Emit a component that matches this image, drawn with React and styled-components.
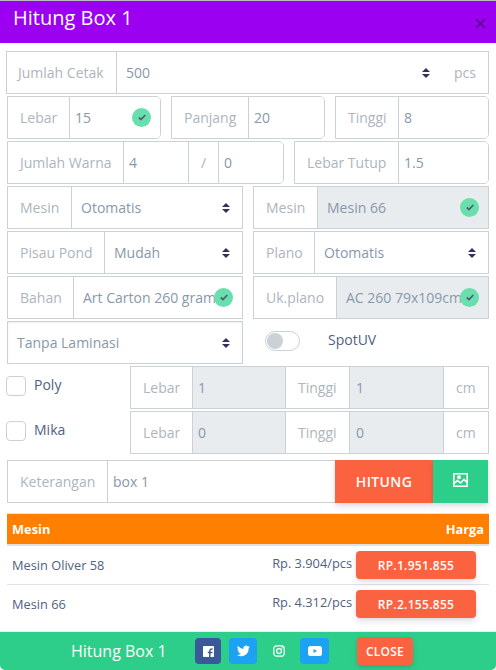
import React from "react";
import styled, { createGlobalStyle, css } from "styled-components";

const Global = createGlobalStyle`
  *, *::before, *::after { box-sizing: border-box; }
  body {
    margin: 0;
    background: #fff;
    font: 400 14px/21px "Open Sans", sans-serif;
    color: #525f7f;
    overflow: hidden;
  }
  button { font-family: inherit; border: 0; padding: 0; color: #fff; cursor: pointer; }
`;

const Modal = styled.div`
  width: 496px;
  height: 670px;
  display: flex;
  flex-direction: column;
  overflow: hidden;
`;

const Header = styled.header`
  height: 43px;
  flex: none;
  display: flex;
  justify-content: space-between;
  padding: 0 10px 0 13px;
  background: #9c00f0;
  border-top: 1px solid #b9b9c4;
`;

const HeaderTitle = styled.h5`
  margin: 2px 0 0;
  font-size: 20px;
  line-height: 30px;
  font-weight: 400;
  color: #fff;
`;

const Dismiss = styled.button`
  width: 11px;
  height: 11px;
  margin-top: 17px;
  background: none;
  display: flex;
  svg { display: block; }
`;

const Form = styled.div`
  flex: none;
  padding: 8px 7px 0;
  display: flex;
  flex-direction: column;
  gap: 2px;
`;

const Row = styled.div`
  display: flex;
  gap: 10px;
  height: 43px;
  margin-left: ${(p) => p.$shift || 0}px;
`;

const Group = styled.div`
  display: flex;
  flex: none;
  width: ${(p) => p.$w}px;
  height: 43px;
  border: 1px solid #cad1d7;
  border-radius: ${(p) => (p.$round ? "0 5px 5px 0" : 0)};
  overflow: hidden;
  > * + * { border-left: 1px solid #cad1d7; }
`;

const Addon = styled.span`
  flex: none;
  width: ${(p) => p.$w}px;
  padding-left: ${(p) => p.$pad ?? 12}px;
  line-height: 42px;
  color: #adb5bd;
  white-space: nowrap;
  && { ${(p) => p.$open && css`border-left: 0;`} }
`;

const Value = styled.div`
  flex: ${(p) => (p.$w ? "none" : "1")};
  width: ${(p) => (p.$w ? `${p.$w}px` : "auto")};
  min-width: 0;
  display: flex;
  align-items: center;
  justify-content: space-between;
  padding: 0 ${(p) => p.$end ?? 9}px 0 ${(p) => p.$pad ?? 5}px;
  line-height: 41px;
  color: #8898aa;
  white-space: nowrap;
  background: ${(p) => (p.$disabled ? "#e9ecef" : "#fff")};
  box-shadow: ${(p) => (p.$inset ? "inset 0 1px 2px rgba(50,50,93,.08)" : "none")};
`;

const Clipped = styled.span`
  min-width: 0;
  flex: 1;
  margin-right: -4px;
  overflow: hidden;
`;

const Badge = styled.span`
  flex: none;
  width: 19px;
  height: 19px;
  border-radius: 50%;
  background: #69dfad;
  display: flex;
  align-items: center;
  justify-content: center;
  z-index: 1;
`;

const ToggleCell = styled.div`
  display: flex;
  padding: 10px 0 0 12px;
`;

const Toggle = styled.span`
  width: 35px;
  height: 20px;
  border: 1px solid #cad1d7;
  border-radius: 10px;
  padding: 1px;
  &::before {
    content: "";
    display: block;
    width: 16px;
    height: 16px;
    border-radius: 50%;
    background: #cad1d7;
  }
`;

const ToggleLabel = styled.span`
  margin: -2px 0 0 28px;
`;

const CheckCell = styled.label`
  display: flex;
  width: 123px;
  margin: 0 -10px 0 0;
`;

const Checkbox = styled.span`
  width: 20px;
  height: 20px;
  margin: 10px 8px 0 -1px;
  border: 1px solid #cad1d7;
  border-radius: 4px;
`;

const CheckLabel = styled.span`
  line-height: 38px;
`;

const NoteRow = styled.div`
  display: flex;
  margin-top: 4px;
`;

const NoteGroup = styled(Group)`
  border-right: 0;
`;

const Action = styled.button`
  width: ${(p) => p.$w}px;
  height: 43px;
  background: ${(p) => p.$bg};
  font-size: 14px;
  font-weight: 600;
  letter-spacing: 0.35px;
  box-shadow: 0 4px 6px rgba(50,50,93,.11), 0 1px 3px rgba(0,0,0,.08);
  svg { display: block; margin: -3px auto 0; }
`;

const Table = styled.div`
  flex: none;
  width: 482px;
  height: 118px;
  margin: 10px 0 0 7px;
  font-size: 12.8px;
`;

const TableHead = styled.div`
  display: flex;
  justify-content: space-between;
  height: 33px;
  padding: 0 5px;
  border-top: 1px solid #e3e5ea;
  border-bottom: 2px solid #dee2e6;
  background: #ff8000;
  color: #fff;
  font-weight: 700;
  line-height: 30px;
`;

const TableRow = styled.div`
  display: flex;
  height: 39px;
  padding: 0 13px 0 5px;
  line-height: 39px;
  & + & { border-top: 1px solid #dee2e6; margin-top: -1px; height: 40px; }
`;

const Machine = styled.span`
  flex: 1;
`;

const Unit = styled.span`
  line-height: 35px;
  margin-right: 4px;
`;

const PriceButton = styled.button`
  width: 120px;
  height: 28px;
  margin-top: 5px;
  border-radius: 4px;
  background: #fb6340;
  font-size: 12px;
  font-weight: 600;
  line-height: 29px;
  letter-spacing: 0.3px;
  box-shadow: 0 4px 6px rgba(50,50,93,.11), 0 1px 3px rgba(0,0,0,.08);
`;

const Footer = styled.footer`
  height: 39px;
  flex: none;
  display: flex;
  align-items: center;
  padding-left: 71px;
  background: #2dce89;
  border-top: 1px solid #e9ecef;
  border-radius: 0 0 5px 5px;
  color: #fff;
`;

const FooterTitle = styled.span`
  width: 124px;
  font-size: 16px;
  line-height: 38px;
`;

const Social = styled.button`
  width: ${(p) => p.$w}px;
  height: 26px;
  margin-right: ${(p) => p.$gap}px;
  border-radius: 4px;
  background: ${(p) => p.$bg};
  display: flex;
  align-items: center;
  justify-content: center;
`;

const CloseButton = styled(PriceButton)`
  width: 56px;
  margin-top: 0;
  letter-spacing: 0.2px;
`;

const Caret = () => (
  <svg width="8" height="10" viewBox="0 0 8 10" fill="#32325d">
    <path d="M4 0 8 4H0ZM0 6h8L4 10Z" />
  </svg>
);

const Tick = () => (
  <Badge>
    <svg width="8" height="7" viewBox="0 0 8 7" fill="none" stroke="#525f7f" strokeWidth="1.8">
      <path d="M.8 3.5 3 5.5 7.3 1" />
    </svg>
  </Badge>
);

const Checked = ({ label, ...rest }) => (
  <Value {...rest}>
    <Clipped>{label}</Clipped>
    <Tick />
  </Value>
);

const Select = ({ children, ...rest }) => (
  <Value $pad={9} $end={12} {...rest}>
    {children}
    <Caret />
  </Value>
);

const Dimensions = ({ name, value }) => (
  <Row>
    <CheckCell>
      <Checkbox />
      <CheckLabel>{name}</CheckLabel>
    </CheckCell>
    <Group $w={359}>
      <Addon $w={61}>Lebar</Addon>
      <Value $w={93} $disabled>{value}</Value>
      <Addon $w={64}>Tinggi</Addon>
      <Value $w={94} $pad={6} $disabled>{value}</Value>
      <Addon $w={45}>cm</Addon>
    </Group>
  </Row>
);

export default function App() {
  return (
    <Modal>
      <Global />
      <Header>
        <HeaderTitle>Hitung Box 1</HeaderTitle>
        <Dismiss aria-label="Close">
          <svg width="11" height="11" viewBox="0 0 11 11" stroke="#6200a0" strokeWidth="1.9">
            <path d="m1 1 9 9M10 1l-9 9" />
          </svg>
        </Dismiss>
      </Header>
      <Form>
        <Row $shift={-1}>
          <Group $w={483}>
            <Addon $w={109} $pad={11}>Jumlah Cetak</Addon>
            <Select $w={322} $end={8}>500</Select>
            <Addon $w={50} $pad={16} $open>pcs</Addon>
          </Group>
        </Row>
        <Row>
          <Group $w={154} $round>
            <Addon $w={61}>Lebar</Addon>
            <Checked label="15" />
          </Group>
          <Group $w={154} $round>
            <Addon $w={76}>Panjang</Addon>
            <Value>20</Value>
          </Group>
          <Group $w={154} $round>
            <Addon $w={62}>Tinggi</Addon>
            <Value>8</Value>
          </Group>
        </Row>
        <Row>
          <Group $w={277} $round>
            <Addon $w={115}>Jumlah Warna</Addon>
            <Value $w={65}>4</Value>
            <Addon $w={30}>/</Addon>
            <Value>0</Value>
          </Group>
          <Group $w={195} $round>
            <Addon $w={103}>Lebar Tutup</Addon>
            <Value>1.5</Value>
          </Group>
        </Row>
        <Row>
          <Group $w={236}>
            <Addon $w={63}>Mesin</Addon>
            <Select>Otomatis</Select>
          </Group>
          <Group $w={236}>
            <Addon $w={63}>Mesin</Addon>
            <Checked label="Mesin 66" $pad={9} $disabled />
          </Group>
        </Row>
        <Row>
          <Group $w={236}>
            <Addon $w={96}>Pisau Pond</Addon>
            <Select>Mudah</Select>
          </Group>
          <Group $w={236}>
            <Addon $w={60}>Plano</Addon>
            <Select>Otomatis</Select>
          </Group>
        </Row>
        <Row>
          <Group $w={236}>
            <Addon $w={65}>Bahan</Addon>
            <Checked label="Art Carton 260 gram" $pad={9} />
          </Group>
          <Group $w={236}>
            <Addon $w={82}>Uk.plano</Addon>
            <Checked label="AC 260 79x109cm" $pad={9} $disabled />
          </Group>
        </Row>
        <Row>
          <Group $w={236}>
            <Select $inset>Tanpa Laminasi</Select>
          </Group>
          <ToggleCell>
            <Toggle />
            <ToggleLabel>SpotUV</ToggleLabel>
          </ToggleCell>
        </Row>
        <Dimensions name="Poly" value="1" />
        <Dimensions name="Mika" value="0" />
        <NoteRow>
          <NoteGroup $w={328}>
            <Addon $w={99}>Keterangan</Addon>
            <Value>box 1</Value>
          </NoteGroup>
          <Action $w={98} $bg="#fb6340">HITUNG</Action>
          <Action $w={55} $bg="#2dce89" aria-label="Gambar">
            <svg width="15" height="14" viewBox="0 0 15 14" fill="none" stroke="#fff" strokeWidth="1.6">
              <path d="M.8.8h13.4v12.4H.8ZM1.5 10.200 4.500 7.600l3 2.400L11 6.400l3 3" />
              <circle cx="6" cy="4.3" r="1.2" />
            </svg>
          </Action>
        </NoteRow>
      </Form>
      <Table>
        <TableHead>
          <span>Mesin</span>
          <span>Harga</span>
        </TableHead>
        <TableRow>
          <Machine>Mesin Oliver 58</Machine>
          <Unit>Rp. 3.904/pcs</Unit>
          <PriceButton>RP.1.951.855</PriceButton>
        </TableRow>
        <TableRow>
          <Machine>Mesin 66</Machine>
          <Unit>Rp. 4.312/pcs</Unit>
          <PriceButton>RP.2.155.855</PriceButton>
        </TableRow>
      </Table>
      <Footer>
        <FooterTitle>Hitung Box 1</FooterTitle>
        <Social $w={26} $gap={8} $bg="#3b5999" aria-label="Facebook">
          <svg width="11" height="11" viewBox="0 0 11 11">
            <rect width="11" height="11" rx=".8" fill="#fff" />
            <path d="M6.800 11V5.200c0-1.600.6-2.300 2.800-2.200M4.800 6.400h4.700" fill="none" stroke="#3b5999" strokeWidth="1.5" />
          </svg>
        </Social>
        <Social $w={28} $gap={8} $bg="#1da1f2" aria-label="Twitter">
          <svg width="13" height="12" viewBox="0 0 24 20" fill="#fff">
            <path d="M24 2.400a9.800 9.800 0 0 1-2.800.8A4.900 4.900 0 0 0 23.300.4a9.900 9.900 0 0 1-3.100 1.200 4.900 4.900 0 0 0-8.400 4.500A14 14 0 0 1 1.700.9a4.900 4.900 0 0 0 1.500 6.600 4.900 4.900 0 0 1-2.200-.6 4.900 4.900 0 0 0 3.900 4.900 5 5 0 0 1-2.200.1 4.900 4.900 0 0 0 4.600 3.400A9.900 9.900 0 0 1 0 17.400 14 14 0 0 0 21.500 5Z" />
          </svg>
        </Social>
        <Social $w={27} $gap={8} $bg="transparent" aria-label="Instagram">
          <svg width="12" height="12" viewBox="0 0 12 12" fill="none" stroke="#fff" strokeWidth="1.2">
            <rect x=".8" y=".8" width="10.400" height="10.400" rx="2.800" />
            <circle cx="6" cy="6" r="2.400" />
            <circle cx="9" cy="3" r=".7" fill="#fff" stroke="none" />
          </svg>
        </Social>
        <Social $w={29} $gap={28} $bg="#1da1f2" aria-label="YouTube">
          <svg width="14" height="10" viewBox="0 0 14 10">
            <rect width="14" height="10" rx="2.500" fill="#fff" />
            <path d="m5.500 3 3.500 2-3.500 2Z" fill="#1da1f2" />
          </svg>
        </Social>
        <CloseButton>CLOSE</CloseButton>
      </Footer>
    </Modal>
  );
}
